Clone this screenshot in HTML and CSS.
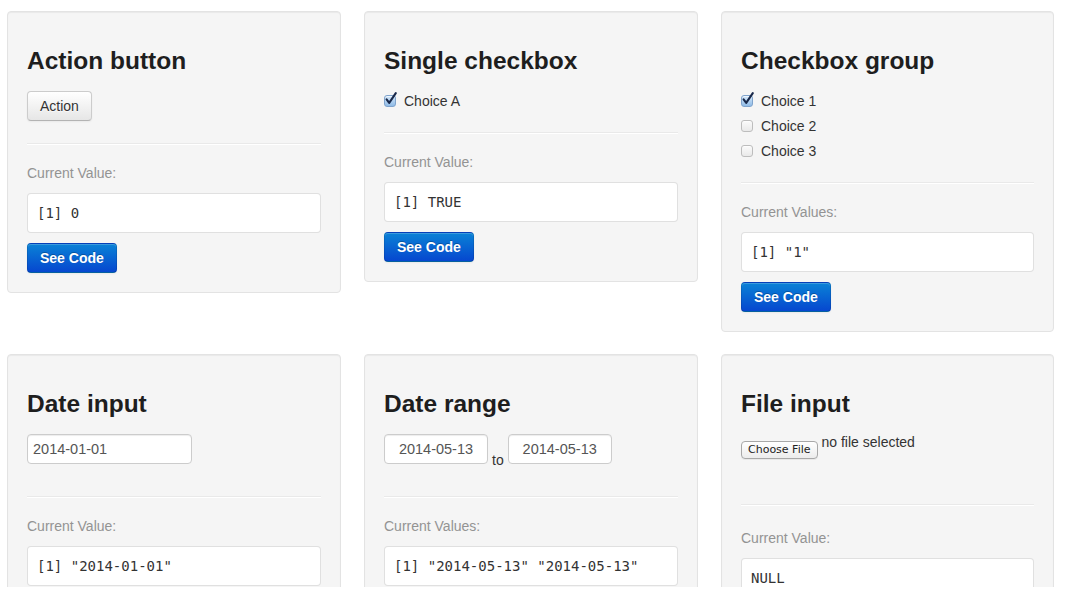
FILE: index.html
```html
<!DOCTYPE html>
<html>
<head>
<meta charset="utf-8">
<link rel="stylesheet" href="styles.css">
</head>
<body>
<div class="viewport">
  <main class="grid">
    <section class="well">
      <h3>Action button</h3>
      <div class="widget w-action"><button class="btn">Action</button></div>
      <hr>
      <p class="muted">Current Value:</p>
      <pre>[1] 0</pre>
      <button class="btn btn-primary">See Code</button>
    </section>

    <section class="well">
      <h3>Single checkbox</h3>
      <div class="widget w-check">
        <label class="check"><span class="cb on"><svg class="tick" viewBox="0 0 14 14"><path d="M2.6 7.4 L5.2 10.8 L11.8 1.2"/></svg></span>Choice A</label>
      </div>
      <hr>
      <p class="muted">Current Value:</p>
      <pre>[1] TRUE</pre>
      <button class="btn btn-primary">See Code</button>
    </section>

    <section class="well">
      <h3>Checkbox group</h3>
      <div class="widget w-check group">
        <label class="check"><span class="cb on"><svg class="tick" viewBox="0 0 14 14"><path d="M2.6 7.4 L5.2 10.8 L11.8 1.2"/></svg></span>Choice 1</label>
        <label class="check"><span class="cb"></span>Choice 2</label>
        <label class="check"><span class="cb"></span>Choice 3</label>
      </div>
      <hr>
      <p class="muted">Current Values:</p>
      <pre>[1] "1"</pre>
      <button class="btn btn-primary">See Code</button>
    </section>

    <section class="well">
      <h3>Date input</h3>
      <div class="widget w-date"><input class="field date-single" type="text" value="2014-01-01" readonly></div>
      <hr>
      <p class="muted">Current Value:</p>
      <pre>[1] "2014-01-01"</pre>
    </section>

    <section class="well">
      <h3>Date range</h3>
      <div class="widget w-date range">
        <input class="field date-range" type="text" value="2014-05-13" readonly>
        <span class="to">to</span>
        <input class="field date-range" type="text" value="2014-05-13" readonly>
      </div>
      <hr>
      <p class="muted">Current Values:</p>
      <pre>[1] "2014-05-13" "2014-05-13"</pre>
    </section>

    <section class="well">
      <h3>File input</h3>
      <div class="widget w-file">
        <button class="file-btn">Choose File</button>
        <span class="file-name">no file selected</span>
      </div>
      <hr class="hr-file">
      <p class="muted">Current Value:</p>
      <pre>NULL</pre>
    </section>
  </main>
</div>
</body>
</html>
```

FILE: styles.css
```css
* { box-sizing: border-box; }

html, body {
  margin: 0;
  padding: 0;
  background: #ffffff;
}

body {
  font-family: "Liberation Sans", Arial, Helvetica, sans-serif;
  font-size: 14px;
  line-height: 20px;
  color: #333333;
}

.viewport {
  height: 587px;
  overflow: hidden;
}

.grid {
  display: grid;
  grid-template-columns: 334px 334px 333px;
  column-gap: 23px;
  row-gap: 22px;
  align-items: start;
  padding: 11px 0 0 7px;
}

.well {
  background: #f5f5f5;
  border: 1px solid #e3e3e3;
  border-radius: 4px;
  box-shadow: inset 0 1px 1px rgba(0, 0, 0, 0.05);
  padding: 19px;
  min-height: 20px;
}

h3 {
  margin: 10px 0;
  font-size: 24.5px;
  line-height: 40px;
  font-weight: bold;
  color: #1e1e1e;
}

.widget { margin: 0; }
.w-action { padding-bottom: 1px; height: 31px; }
.w-check { display: flex; flex-direction: column; gap: 5px; }
.w-date { display: flex; align-items: flex-start; height: 41px; padding-bottom: 11px; }
.w-file { display: flex; align-items: flex-start; height: 49px; padding-bottom: 24px; }

hr {
  margin: 21px 0 18px;
  border: 0;
  border-top: 1px solid #e9e9e9;
  border-bottom: 1px solid #ffffff;
  height: 0;
}
.hr-file { margin-bottom: 22px; }

.muted {
  margin: 0 0 10px;
  color: #939393;
}

pre {
  margin: 0 0 10px;
  height: 40px;
  padding: 9px 9px;
  background: #ffffff;
  border: 1px solid rgba(0, 0, 0, 0.12);
  border-radius: 4px;
  font-family: "DejaVu Sans Mono", Menlo, Monaco, monospace;
  font-size: 14px;
  line-height: 20px;
  color: #333333;
  white-space: pre;
  overflow: hidden;
}

.btn {
  display: block;
  width: max-content;
  height: 30px;
  padding: 4px 12px;
  font-family: inherit;
  font-size: 14px;
  line-height: 20px;
  color: #333333;
  text-shadow: 0 1px 1px rgba(255, 255, 255, 0.75);
  background: linear-gradient(to bottom, #ffffff, #e6e6e6);
  border: 1px solid #cccccc;
  border-bottom-color: #b3b3b3;
  border-radius: 4px;
  box-shadow: inset 0 1px 0 rgba(255, 255, 255, 0.2), 0 1px 2px rgba(0, 0, 0, 0.05);
  cursor: pointer;
}

.btn-primary {
  color: #ffffff;
  font-weight: bold;
  text-shadow: 0 -1px 0 rgba(0, 0, 0, 0.25);
  background: linear-gradient(to bottom, #0a82d6, #0647cf);
  border-color: rgba(0, 0, 0, 0.1) rgba(0, 0, 0, 0.1) rgba(0, 0, 0, 0.25);
}

.check {
  display: flex;
  align-items: center;
  gap: 8px;
  height: 20px;
  color: #333333;
}

.cb {
  position: relative;
  flex: none;
  width: 12px;
  height: 12px;
  border: 1px solid #bdbdbd;
  border-radius: 3px;
  background: linear-gradient(to bottom, #fbfbfb, #e9e9e9);
  box-shadow: inset 0 1px 0 rgba(255, 255, 255, 0.6);
}

.cb.on {
  border-color: #7fa3cc;
  background: linear-gradient(to bottom, #d5e8fa, #8fbbe6);
}

.tick {
  position: absolute;
  left: -1px;
  top: -4px;
  width: 14px;
  height: 14px;
  overflow: visible;
}

.tick path {
  fill: none;
  stroke: #18284a;
  stroke-width: 2.1;
  stroke-linecap: round;
  stroke-linejoin: round;
}

.field {
  height: 30px;
  padding: 4px 5px;
  font-family: inherit;
  font-size: 14.5px;
  line-height: 20px;
  color: #555555;
  background: #ffffff;
  border: 1px solid #cccccc;
  border-radius: 4px;
  box-shadow: inset 0 1px 1px rgba(0, 0, 0, 0.075);
  outline: none;
}

.date-single { width: 165px; }
.date-range { width: 104px; text-align: center; }

.to {
  padding: 16px 4px 0;
  line-height: 20px;
  font-size: 14px;
  color: #333333;
}

.file-btn {
  margin-top: 7px;
  height: 18px;
  padding: 0 6px;
  font-family: "DejaVu Sans", "Lucida Grande", sans-serif;
  font-size: 11px;
  line-height: 16px;
  color: #222222;
  background: linear-gradient(to bottom, #ffffff, #ececec);
  border: 1px solid #a8a8a8;
  border-radius: 4px;
  box-shadow: 0 1px 0 rgba(0, 0, 0, 0.05);
}

.file-name {
  margin-left: 4px;
  line-height: 16px;
  color: #333333;
}
```
